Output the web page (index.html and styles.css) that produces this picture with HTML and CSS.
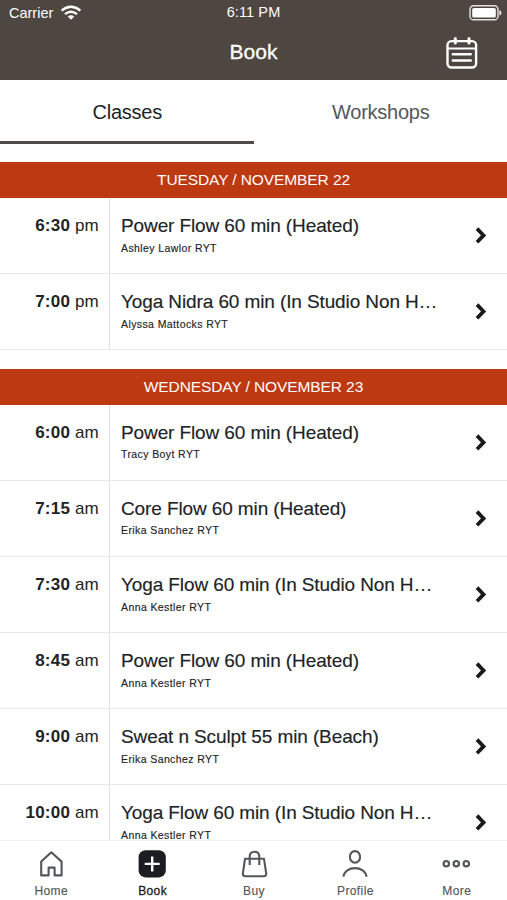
FILE: index.html
```html
<!DOCTYPE html>
<html lang="en">
<head>
<meta charset="utf-8">
<title>Book</title>
<link rel="stylesheet" href="styles.css">
</head>
<body>
<svg class="defs" width="0" height="0"><symbol id="chevron" viewBox="0 0 12 18"><path d="M2 1.6 L8.6 8.4 L2 15.2" fill="none" stroke="#191a1c" stroke-width="3.7"/></symbol></svg>
<div class="app">
  <header class="header">
    <div class="status">
      <div class="carrier"><span>Carrier</span>
        <svg width="22" height="16" viewBox="0 0 22 16" fill="none" stroke="#fff" stroke-width="2.3"><path d="M1.6 5.6 Q11 -2.2 20.4 5.6"/><path d="M5 9.2 Q11 4.3 17 9.2"/><path d="M11 14.8 L7.7 11.6 Q11 8.8 14.3 11.6 Z" fill="#fff" stroke="none"/></svg>
      </div>
      <div class="clock">6:11 PM</div>
      <svg class="battery" width="33" height="16" viewBox="0 0 33 16"><rect x="1" y=".8" width="28" height="14" rx="3.6" fill="none" stroke="#e5e1df" stroke-width="1.4"/><rect x="3.2" y="3" width="23.6" height="9.6" rx="1.5" fill="#fff"/><path d="M30.4 5 Q32.5 5.4 32.5 7.8 Q32.5 10.2 30.4 10.6Z" fill="#e5e1df"/></svg>
    </div>
    <div class="titlebar">
      <h1>Book</h1>
      <svg class="calendar" width="32" height="32" viewBox="0 0 32 32" fill="none" stroke="#fff" stroke-linecap="round"><rect x="1.5" y="4.1" width="28.6" height="26.4" rx="4" stroke-width="2.4"/><path d="M2 11.5H30" stroke-width="2"/><path d="M9.3 1.6V6M23 1.6V6" stroke-width="3"/><path d="M6.8 17.3H24.8M6.8 23.5H24.8" stroke-width="2.4"/></svg>
    </div>
  </header>
  <nav class="tabs"><div class="tab active">Classes</div><div class="tab">Workshops</div></nav>
  <main class="schedule">
    <section class="day">
      <h2>TUESDAY / NOVEMBER 22</h2>
      <article class="row"><div class="time"><b>6:30</b> pm</div><div class="info"><h3>Power Flow 60 min (Heated)</h3><p>Ashley Lawlor RYT</p></div><svg class="chev"><use href="#chevron"/></svg></article>
      <article class="row"><div class="time"><b>7:00</b> pm</div><div class="info"><h3>Yoga Nidra 60 min (In Studio Non H…</h3><p>Alyssa Mattocks RYT</p></div><svg class="chev"><use href="#chevron"/></svg></article>
    </section>
    <section class="day">
      <h2>WEDNESDAY / NOVEMBER 23</h2>
      <article class="row"><div class="time"><b>6:00</b> am</div><div class="info"><h3>Power Flow 60 min (Heated)</h3><p>Tracy Boyt RYT</p></div><svg class="chev"><use href="#chevron"/></svg></article>
      <article class="row"><div class="time"><b>7:15</b> am</div><div class="info"><h3>Core Flow 60 min (Heated)</h3><p>Erika Sanchez RYT</p></div><svg class="chev"><use href="#chevron"/></svg></article>
      <article class="row"><div class="time"><b>7:30</b> am</div><div class="info"><h3>Yoga Flow 60 min (In Studio Non H…</h3><p>Anna Kestler RYT</p></div><svg class="chev"><use href="#chevron"/></svg></article>
      <article class="row"><div class="time"><b>8:45</b> am</div><div class="info"><h3>Power Flow 60 min (Heated)</h3><p>Anna Kestler RYT</p></div><svg class="chev"><use href="#chevron"/></svg></article>
      <article class="row"><div class="time"><b>9:00</b> am</div><div class="info"><h3>Sweat n Sculpt 55 min (Beach)</h3><p>Erika Sanchez RYT</p></div><svg class="chev"><use href="#chevron"/></svg></article>
      <article class="row"><div class="time"><b>10:00</b> am</div><div class="info"><h3>Yoga Flow 60 min (In Studio Non H…</h3><p>Anna Kestler RYT</p></div><svg class="chev"><use href="#chevron"/></svg></article>
    </section>
  </main>
  <nav class="bottom">
    <div class="item"><svg width="30" height="30" viewBox="0 0 30 30" fill="none" stroke="#54575a" stroke-width="2.1" stroke-linejoin="round"><path d="M5.2 12.6 L15.3 3.3 L25.6 12.6 V26.4 H18.6 V18.6 H12.6 V26.4 H5.2Z"/></svg><span>Home</span></div>
    <div class="item current"><svg width="30" height="30" viewBox="0 0 30 30"><rect x="1.6" y="1.2" width="27.2" height="27.2" rx="7" fill="#1c1d20"/><path d="M15.2 7.4V22.4M7.7 14.9H22.7" stroke="#fff" stroke-width="2.4"/></svg><span>Book</span></div>
    <div class="item"><svg width="30" height="30" viewBox="0 0 30 30" fill="none" stroke="#54575a" stroke-width="2.1"><path d="M6 9.8H25L27.2 24.4Q27.4 27.2 24.8 27.2H6.3Q3.6 27.2 3.9 24.4Z" stroke-linejoin="round"/><path d="M10.7 16V7.6Q10.7 2.7 15.5 2.7T20.3 7.6V16"/></svg><span>Buy</span></div>
    <div class="item"><svg width="30" height="30" viewBox="0 0 30 30" fill="none" stroke="#54575a" stroke-width="2.1"><ellipse cx="15" cy="7.9" rx="5.1" ry="5.8"/><path d="M3.5 27.8C4.3 16.2 25.7 16.2 26.5 27.8"/></svg><span>Profile</span></div>
    <div class="item"><svg width="30" height="30" viewBox="0 0 30 30" fill="none" stroke="#54575a" stroke-width="2.2"><circle cx="5.3" cy="14.7" r="2.7"/><circle cx="15.3" cy="14.7" r="2.7"/><circle cx="25.3" cy="14.7" r="2.7"/></svg><span>More</span></div>
  </nav>
</div>
</body>
</html>
```
FILE: styles.css
```css
* { box-sizing: border-box; margin: 0; padding: 0; }
body { font-family: "Liberation Sans", Arial, sans-serif; background: #fff; color: #212326; }
.defs { position: absolute; }
svg { display: block; flex: none; }
.app { width: 507px; height: 900px; display: flex; flex-direction: column; overflow: hidden; }
.header { height: 80px; flex: none; background: #4e4641; color: #fff; }
.status { height: 26px; display: grid; grid-template-columns: 1fr auto 1fr; align-items: center; padding: 0 5px 0 9px; font-size: 14.5px; }
.carrier { display: flex; align-items: center; gap: 7px; }
.clock { letter-spacing: .1px; padding: 0 4px 2px 0; }
.battery { justify-self: end; }
.titlebar { height: 54px; display: grid; grid-template-columns: 1fr auto 1fr; align-items: center; padding: 0 29px; }
.titlebar h1 { grid-column: 2; font-size: 21px; font-weight: 400; line-height: 24px; padding-bottom: 2px; -webkit-text-stroke: .3px #fff; }
.calendar { justify-self: end; }
.tabs { height: 64px; flex: none; display: flex; }
.tab { flex: 1; text-align: center; font-size: 20px; line-height: 64px; letter-spacing: -.25px; padding-left: 1px; color: #54575a; border-bottom: 3px solid transparent; }
.tab.active { color: #212326; border-color: #504a49; }
.schedule { flex: 1; min-height: 0; overflow: hidden; padding-top: 18px; }
.day { margin-bottom: 18.4px; }
.day h2 { height: 36px; background: #bc3912; color: #fff; text-align: center; font-size: 15.5px; font-weight: 400; line-height: 36px; letter-spacing: -.1px; }
.row { height: 76.15px; display: flex; border-bottom: 1px solid #e9eaeb; }
.time { width: 110px; flex: none; padding: 18px 10px 0 0; border-right: 1px solid #dfe1e3; text-align: right; font-size: 17px; line-height: 20px; letter-spacing: .2px; white-space: nowrap; }
.info { flex: 1; min-width: 0; padding: 16px 0 0 11px; }
.info h3 { font-size: 19px; font-weight: 400; line-height: 24px; letter-spacing: -.11px; white-space: nowrap; -webkit-text-stroke: .15px #212326; }
.info p { font-size: 10.5px; line-height: 14px; margin-top: 2.6px; letter-spacing: .4px; -webkit-text-stroke: .15px #212326; }
.chev { width: 12px; height: 18px; margin: 29px 20px 0 0; }
.bottom { height: 60px; flex: none; display: flex; border-top: 1px solid #f0f0f0; padding-top: 8px; }
.item { flex: 1; display: flex; flex-direction: column; align-items: center; color: #54575a; font-size: 12px; letter-spacing: .4px; line-height: 14px; gap: 5px; }
.item span { padding-left: 1px; -webkit-text-stroke: .15px #54575a; }
.current { color: #1c1d20; }
.current span { -webkit-text-stroke: .3px #1c1d20; }
```
